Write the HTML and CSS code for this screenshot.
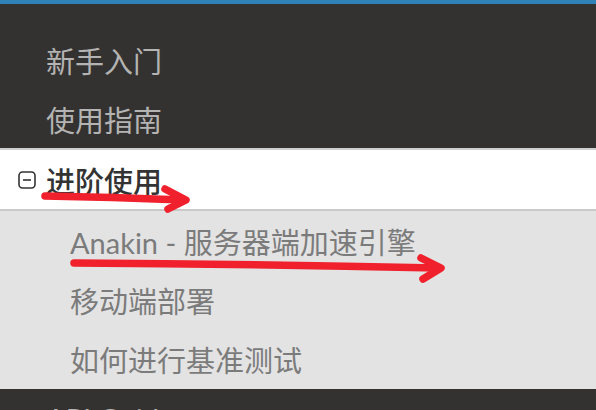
FILE: index.html
```html
<!DOCTYPE html>
<html lang="zh">
<head>
<meta charset="utf-8">
<link rel="stylesheet" href="styles.css">
</head>
<body>
<div class="topbar"></div>
<nav class="menu">
  <ul class="group dark first">
    <li class="item">新手入门</li>
    <li class="item">使用指南</li>
  </ul>
  <div class="open">
    <div class="open-head">
      <svg class="toggle" width="18" height="18" viewBox="0 0 18 18"><rect x="1" y="1" width="16" height="16" rx="3.5" fill="none" stroke="#333" stroke-width="1.6"/><line x1="5" y1="9" x2="13" y2="9" stroke="#333" stroke-width="1.6"/></svg>
      <span>进阶使用</span>
    </div>
    <ul class="sub">
      <li class="sub-item">Anakin - 服务器端加速引擎</li>
      <li class="sub-item">移动端部署</li>
      <li class="sub-item">如何进行基准测试</li>
    </ul>
  </div>
  <ul class="group dark">
    <li class="item">API Guides</li>
  </ul>
</nav>
<svg class="annot" width="596" height="410" viewBox="0 0 596 410">
  <g fill="none" stroke="#f0202c" stroke-width="7.5" stroke-linecap="round" stroke-linejoin="round">
    <path d="M45 196 Q110 197 184 200"/>
    <path d="M165 189 L186 200 L168 209"/>
    <path d="M74 263 Q250 264 438 268"/>
    <path d="M421 258 L441 268 L423 279"/>
  </g>
</svg>
</body>
</html>
```
FILE: styles.css
```css
html, body {
  margin: 0;
  padding: 0;
  width: 596px;
  height: 410px;
  overflow: hidden;
  background: #343230;
  font-family: "Lato", "Noto Sans CJK SC", sans-serif;
}
.topbar {
  height: 4px;
  background: #2e82b8;
}
.menu {
  display: flex;
  flex-direction: column;
}
.group {
  list-style: none;
  margin: 0;
  padding: 0;
}
.dark {
  background: #343230;
}
.first {
  padding-top: 26px;
}
.item {
  height: 59px;
  display: flex;
  align-items: center;
  padding-left: 46px;
  font-size: 29px;
  color: #b4b4b4;
}
.open {
  border-top: 2px solid #cfcfcf;
}
.open-head {
  height: 59px;
  background: #fff;
  display: flex;
  align-items: center;
  gap: 10px;
  padding-left: 18px;
  font-size: 29px;
  color: #333;
  font-weight: 500;
  border-bottom: 2px solid #c9c9c9;
}
.toggle {
  flex: none;
}
.sub {
  list-style: none;
  margin: 0;
  padding: 0 0 1px 0;
  background: #e3e3e3;
}
.sub-item {
  height: 59px;
  display: flex;
  align-items: center;
  padding-left: 70px;
  font-size: 29px;
  color: #7b7b7b;
}
.annot {
  position: absolute;
  left: 0;
  top: 0;
  pointer-events: none;
}
```
